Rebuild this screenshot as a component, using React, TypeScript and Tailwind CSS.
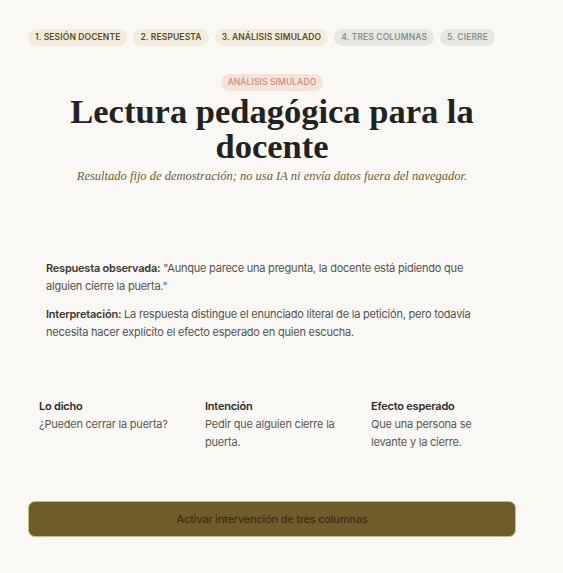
import React from 'react';

const steps = [
  { label: '1. Sesión docente', done: true },
  { label: '2. Respuesta', done: true },
  { label: '3. Análisis simulado', done: true },
  { label: '4. Tres columnas', done: false },
  { label: '5. Cierre', done: false },
];

const columns = [
  { title: 'Lo dicho', text: '¿Pueden cerrar la puerta?' },
  { title: 'Intención', text: 'Pedir que alguien cierre la puerta.' },
  { title: 'Efecto esperado', text: 'Que una persona se levante y la cierre.' },
];

export default function App() {
  return (
    <div className="min-h-[573px] w-full bg-[#f9f8f4] font-['Inter','Liberation_Sans',sans-serif] text-[#3f3d39]">
      <div className="ml-[28px] w-[488px] pt-[29px]">
        <div className="flex gap-[6px]">
          {steps.map((s) => (
            <span
              key={s.label}
              className={`h-[17px] whitespace-nowrap rounded-full px-[7px] text-[8.5px] font-semibold uppercase leading-[17px] tracking-[0.015em] ${
                s.done ? 'bg-[#f2ecdc] text-[#5c4c27]' : 'bg-[#e6e7e1] font-medium text-[#8d9188]'
              }`}
            >
              {s.label}
            </span>
          ))}
        </div>

        <div className="mt-[28px] flex flex-col items-center text-center">
          <span className="h-[17px] rounded-full bg-[#f6e3da] px-[7px] text-[8.5px] font-medium uppercase leading-[17px] tracking-[0.015em] text-[#c38d7e]">
            Análisis simulado
          </span>
          <h1 className="mt-[3px] w-[440px] font-['Liberation_Serif',serif] text-[34.5px] font-bold leading-[35px] text-[#222220]">
            Lectura pedagógica para la docente
          </h1>
          <p className="mt-[3px] font-['Liberation_Serif',serif] text-[12.5px] italic text-[#6d5c31]">
            Resultado fijo de demostración; no usa IA ni envía datos fuera del navegador.
          </p>
        </div>

        <div className="mt-[73px] px-[18px] text-[11px] leading-[18px] text-[#55534e]">
          <p className="tracking-[-0.02em]">
            <strong className="font-semibold text-[#3a3833]">Respuesta observada:</strong> "Aunque parece una pregunta, la docente está pidiendo que alguien cierre la puerta."
          </p>
          <p className="mt-[10px] tracking-[-0.02em]">
            <strong className="font-semibold text-[#3a3833]">Interpretación:</strong> La respuesta distingue el enunciado literal de la petición, pero todavía necesita hacer explícito el efecto esperado en quien escucha.
          </p>
        </div>

        <div className="mt-[56px] grid grid-cols-3 gap-8 px-[11px] text-[11px] leading-[18px] tracking-[-0.02em]">
          {columns.map((c) => (
            <div key={c.title} className="pr-[4px]">
              <div className="font-semibold text-[#2e2c28]">{c.title}</div>
              <div className="text-[#5a5853]">{c.text}</div>
            </div>
          ))}
        </div>

        <button className="mt-[50px] h-[36px] w-full rounded-[7px] border border-[#c9b98c] bg-[#6e5c2b] text-[11px] font-medium tracking-[-0.02em] text-[#3a3014]">
          Activar intervención de tres columnas
        </button>
      </div>
    </div>
  );
}
